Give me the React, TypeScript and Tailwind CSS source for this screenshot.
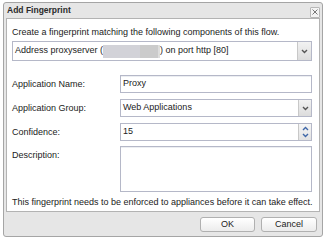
import React from 'react';

const font = { fontFamily: '"Liberation Sans", Arial, sans-serif' };

// small chevron for select triggers
const Chevron = ({ up = false, color = '#555' }: { up?: boolean; color?: string }) => (
  <svg width="7" height="5" viewBox="0 0 7 5">
    <polyline
      points={up ? '1,4 3.5,1.5 6,4' : '1,1 3.5,3.5 6,1'}
      fill="none"
      stroke={color}
      strokeWidth="1.4"
    />
  </svg>
);

const Label = ({ children }: { children: React.ReactNode }) => (
  <div className="w-[108px] shrink-0 text-[9px] leading-[12px] text-[#222]">{children}</div>
);

const TextField = ({ value }: { value: string }) => (
  <div className="flex-1 h-[18px] border border-[#b5b8c8] bg-white flex items-center pl-[2px] text-[9px] text-[#222] shadow-[inset_0_1px_0_#eceef2]">
    {value}
  </div>
);

const Select = ({ value }: { value: string }) => (
  <div className="flex-1 h-[18px] border border-[#b5b8c8] bg-white flex items-stretch text-[9px] text-[#222]">
    <div className="flex-1 flex items-center pl-[2px]">{value}</div>
    <div className="w-[13px] border-l border-[#c8c8c8] bg-gradient-to-b from-[#f2f2f2] to-[#dcdcdc] flex items-center justify-center">
      <Chevron />
    </div>
  </div>
);

export default function App() {
  return (
    <div className="w-[324px] h-[240px] bg-white pt-[2px] pl-[3px]" style={font}>
      <div className="w-[320px] h-[235px] border border-[#a5a5a5] rounded-[3px] bg-[#e6e6e6] flex flex-col">
        {/* title bar */}
        <div className="h-[15px] flex items-center justify-between pl-[3px] pr-[2px]">
          <span className="text-[8.5px] font-bold text-[#2a2a2a]">Add Fingerprint</span>
          <div className="w-[10px] h-[11px] mt-[3px] border border-[#b8b8b8] rounded-[1px] bg-[#f4f4f4] flex items-center justify-center">
            <svg width="6" height="6" viewBox="0 0 6 6">
              <path d="M0.5 0.5 L5.5 5.5 M5.5 0.5 L0.5 5.5" stroke="#777" strokeWidth="1" />
            </svg>
          </div>
        </div>

        {/* body */}
        <div className="mx-[2px] h-[194px] border border-[#b3b3b3] bg-white flex flex-col pl-[5px] pr-[7px] pt-[7px]">
          <div className="text-[9px] leading-[12px] text-[#222]">
            Create a fingerprint matching the following components of this flow.
          </div>
          <div className="mt-[3px] h-[20px] border border-[#b5b8c8] flex items-stretch text-[9px] text-[#222]">
            <div className="flex-1 flex items-center pl-[2px]">
              <span>Address proxyserver (</span>
              <span className="flex h-[13px]">
                <span className="w-[37px] bg-[#d2d2d8]" />
                <span className="w-[18px] bg-[#cbcbcb]" />
                <span className="w-[2px] bg-[#dedede]" />
              </span>
              <span>) on port http [80]</span>
            </div>
            <div className="w-[14px] border-l border-[#c8c8c8] bg-gradient-to-b from-[#f2f2f2] to-[#dcdcdc] flex items-center justify-center">
              <Chevron />
            </div>
          </div>

          <div className="mt-[14px] flex items-center">
            <Label>Application Name:</Label>
            <TextField value="Proxy" />
          </div>
          <div className="mt-[6px] flex items-center">
            <Label>Application Group:</Label>
            <Select value="Web Applications" />
          </div>
          <div className="mt-[6px] flex items-center">
            <Label>Confidence:</Label>
            <div className="flex-1 h-[18px] border border-[#b5b8c8] bg-white flex items-stretch text-[9px] text-[#222]">
              <div className="flex-1 flex items-center pl-[2px]">15</div>
              <div className="w-[13px] border-l border-[#c8c8c8] bg-gradient-to-b from-[#f6f6f6] to-[#e2e2e2] flex flex-col items-center justify-center gap-[2px]">
                <Chevron up color="#3f67a8" />
                <Chevron color="#3f67a8" />
              </div>
            </div>
          </div>
          <div className="mt-[5px] flex items-start">
            <div className="pt-[3px]">
              <Label>Description:</Label>
            </div>
            <div className="flex-1 h-[46px] border border-[#b5b8c8] bg-white shadow-[inset_0_1px_0_#eceef2]" />
          </div>

          <div className="mt-[4px] text-[9px] leading-[12px] text-[#222] whitespace-nowrap">
            This fingerprint needs to be enforced to appliances before it can take effect.
          </div>
        </div>

        {/* footer */}
        <div className="flex-1 flex items-center justify-end gap-[6px] pr-[5px]">
          <button className="w-[55px] h-[15px] border border-[#b0b0b0] rounded-[3px] bg-gradient-to-b from-[#ffffff] to-[#ececec] text-[9px] text-[#222]">
            OK
          </button>
          <button className="w-[56px] h-[15px] border border-[#b0b0b0] rounded-[3px] bg-gradient-to-b from-[#ffffff] to-[#ececec] text-[9px] text-[#222]">
            Cancel
          </button>
        </div>
      </div>
    </div>
  );
}
